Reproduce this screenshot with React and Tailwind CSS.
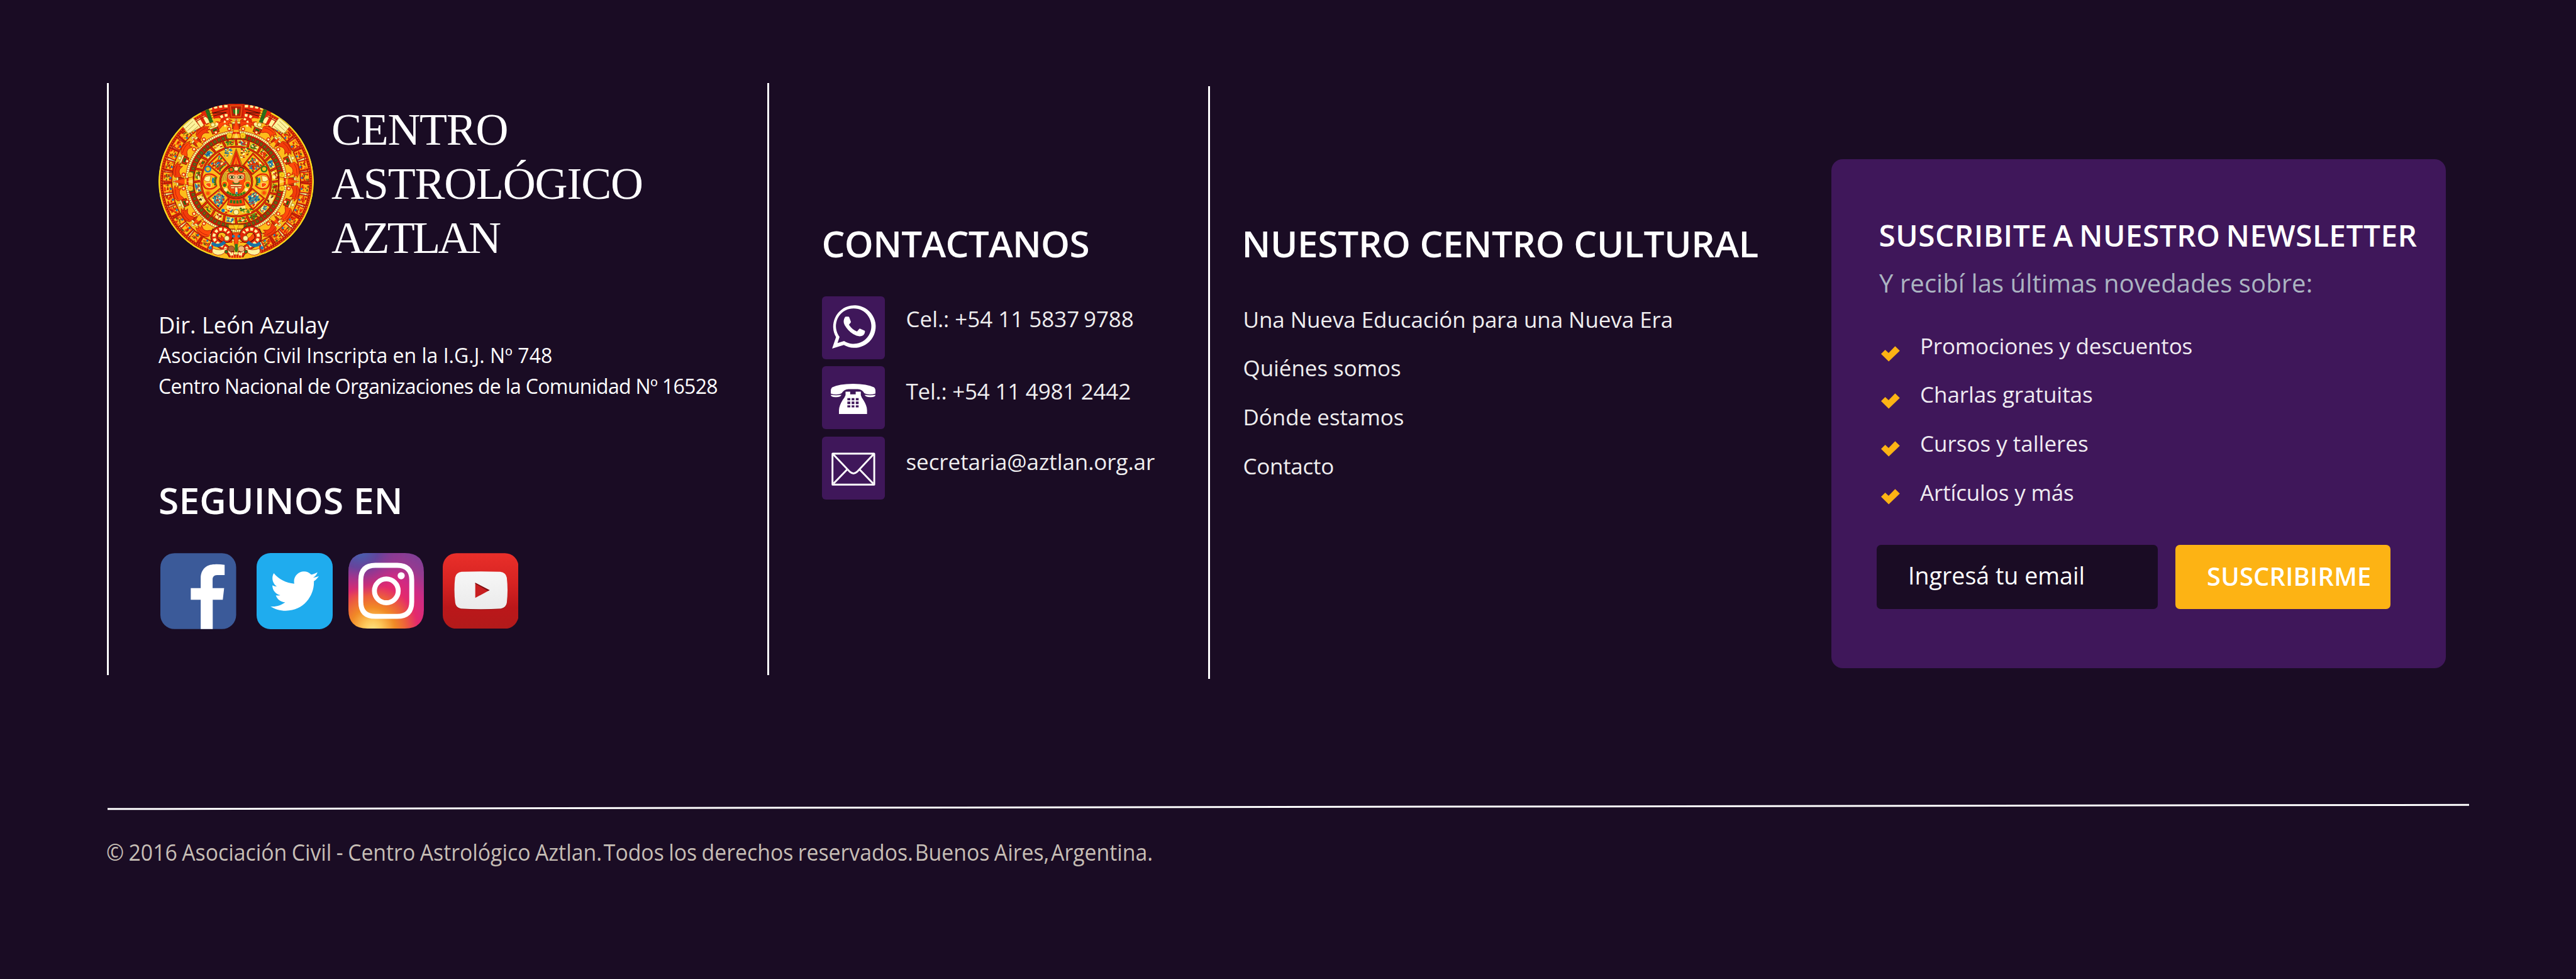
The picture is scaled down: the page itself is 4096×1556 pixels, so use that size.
import React from "react";
import { FaTwitter } from "react-icons/fa";

const RED = "#e22608";
const DARK_RED = "#b81a08";
const ORANGE = "#ff4a0a";
const GOLD = "#fdbd1b";
const CREAM = "#fdf39a";
const GREEN = "#2f7a1c";
const BLUE = "#1b7fb4";
const INK = "#3a1206";

const range = (n) => Array.from({ length: n }, (_, i) => i);

/* Repeatable noise, so the carving looks the same on every render. */
const noise = (seed) => {
  const v = Math.sin(seed * 127.1 + 11.7) * 43758.5453;
  return v - Math.floor(v);
};

function Ring({ r, width, color, dash }) {
  return <circle r={r} fill="none" stroke={color} strokeWidth={width} strokeDasharray={dash} />;
}

function Spokes({ count, start = 0, children }) {
  return range(count).map((i) => (
    <g key={i} transform={`rotate(${start + (360 / count) * i})`}>
      {children(i)}
    </g>
  ));
}

function Speckle({ seed, w, h, n, colors, size = 11 }) {
  return range(n).map((i) => {
    const x = (noise(seed + i * 3) - 0.5) * w;
    const y = (noise(seed + i * 3 + 1) - 0.5) * h;
    const s = size * (0.6 + noise(seed + i * 3 + 2) * 0.9);
    return (
      <rect
        key={i}
        x={x - s / 2}
        y={y - s / 2}
        width={s * 1.2}
        height={s * 0.75}
        rx={s * 0.25}
        fill={colors[Math.floor(noise(seed * 2 + i) * colors.length)]}
      />
    );
  });
}

/* Solar ray with volutes at its base, pointing up. */
function Ray() {
  return (
    <g strokeLinejoin="round">
      <path d="M-72 -352 H72 V-385 H-72Z" fill={GOLD} />
      <circle cx="-54" cy="-374" r="23" fill="#fbd21c" stroke="#a86a08" strokeWidth="3" />
      <circle cx="54" cy="-374" r="23" fill="#fbd21c" stroke="#a86a08" strokeWidth="3" />
      <circle cx="-54" cy="-372" r="9" fill="#f0a512" />
      <circle cx="54" cy="-372" r="9" fill="#f0a512" />
      <path d="M0 -512 L38 -352 H-38Z" fill={GOLD} stroke={DARK_RED} strokeWidth="4" />
      <path d="M0 -512 L23 -420 H-23Z" fill={ORANGE} />
      <path d="M-27 -404 H27 L31 -388 H-31Z" fill={RED} />
      <path d="M0 -404 L18 -352 H-18Z" fill={CREAM} opacity="0.5" />
    </g>
  );
}

function Serpent() {
  return (
    <g>
      <path d="M30 610 C60 520 190 520 180 440 C170 380 90 370 60 420 C45 455 70 480 100 468" fill="none" stroke={INK} strokeWidth="58" />
      <path d="M30 610 C60 520 190 520 180 440 C170 380 90 370 60 420 C45 455 70 480 100 468" fill="none" stroke={RED} strokeWidth="50" />
      <path d="M30 610 C60 520 190 520 180 440 C170 380 90 370 60 420" fill="none" stroke={CREAM} strokeWidth="24" strokeDasharray="24 14" />
      <path d="M92 492 Q150 545 196 500" fill="none" stroke={BLUE} strokeWidth="26" />
      <path d="M92 492 Q150 545 196 500" fill="none" stroke="#0c3e60" strokeWidth="26" strokeDasharray="2 8" />
      <path d="M70 540 Q130 570 190 545 Q210 590 150 600 Q90 600 70 540" fill={CREAM} stroke={DARK_RED} strokeWidth="4" />
      <circle cx="76" cy="462" r="20" fill={CREAM} stroke="#8a5a10" strokeWidth="3" />
      <circle cx="210" cy="540" r="13" fill={BLUE} />
      <circle cx="80" cy="572" r="14" fill={GREEN} stroke={DARK_RED} strokeWidth="5" />
    </g>
  );
}

function Face() {
  return (
    <g>
      <circle r="132" fill={GOLD} />
      <g fill="#f6d23c">
        <path d="M-118 -62 Q-60 -96 0 -72 Q60 -96 118 -62 L112 40 H-112Z" />
      </g>
      {range(7).map((i) => (
        <g key={i} stroke="#a86a08" strokeWidth="3" fill="none">
          <path d={`M${-72 - i * 7} -72 Q${-88 - i * 7} -20 ${-80 - i * 6} 20`} />
          <path d={`M${72 + i * 7} -72 Q${88 + i * 7} -20 ${80 + i * 6} 20`} />
        </g>
      ))}
      <path d="M-92 -76 Q0 -118 92 -76 Q40 -86 0 -78 Q-40 -86 -92 -76Z" fill={RED} />
      <circle cx="-40" cy="-96" r="19" fill={ORANGE} stroke={GREEN} strokeWidth="10" />
      <circle cx="40" cy="-96" r="19" fill={ORANGE} stroke={GREEN} strokeWidth="10" />
      <circle cy="-104" r="18" fill={CREAM} stroke={DARK_RED} strokeWidth="4" />
      <path d="M-66 -68 Q0 -84 66 -68 Q82 -20 66 50 Q40 104 0 106 Q-40 104 -66 50 Q-82 -20 -66 -68Z" fill={ORANGE} stroke={DARK_RED} strokeWidth="5" />
      <path d="M-62 -56 Q-30 -68 -6 -52 L0 -64 L6 -52 Q30 -68 62 -56 Q74 -30 52 -14 L24 -8 L14 12 H-14 L-24 -8 L-52 -14 Q-74 -30 -62 -56Z" fill="#f7b877" />
      <ellipse cx="-34" cy="-36" rx="23" ry="11" fill={CREAM} stroke={INK} strokeWidth="4" />
      <ellipse cx="34" cy="-36" rx="23" ry="11" fill={CREAM} stroke={INK} strokeWidth="4" />
      <circle cx="-34" cy="-36" r="9" fill="#23430f" />
      <circle cx="34" cy="-36" r="9" fill="#23430f" />
      <path d="M-30 8 L-12 18 H12 L30 8" fill="none" stroke={GREEN} strokeWidth="9" />
      <rect x="-48" y="24" width="96" height="16" rx="6" fill={CREAM} stroke={DARK_RED} strokeWidth="4" />
      <rect x="-44" y="44" width="88" height="14" rx="6" fill={CREAM} stroke={DARK_RED} strokeWidth="4" />
      <path d="M-13 44 H13 L16 96 L3 116 L-11 96Z" fill={CREAM} stroke={DARK_RED} strokeWidth="5" />
      <circle cx="4" cy="94" r="9" fill={BLUE} />
      <circle cx="-94" cy="22" r="25" fill={ORANGE} stroke="#fbd21c" strokeWidth="9" />
      <circle cx="94" cy="22" r="25" fill={ORANGE} stroke="#fbd21c" strokeWidth="9" />
      <ellipse cx="-94" cy="30" rx="12" ry="15" fill={GREEN} />
      <ellipse cx="94" cy="30" rx="12" ry="15" fill={GREEN} />
      <circle cx="-84" cy="66" r="14" fill={CREAM} />
      <circle cx="84" cy="66" r="14" fill={CREAM} />
      <path d="M-76 84 Q0 138 76 84" fill="none" stroke={GREEN} strokeWidth="17" strokeDasharray="20 3" />
      <circle r="130" fill="none" stroke={INK} strokeWidth="16" />
      <circle r="130" fill="none" stroke={RED} strokeWidth="12" />
    </g>
  );
}

function SunStone() {
  const cells = [
    [BLUE, CREAM, RED], [GREEN, CREAM, DARK_RED], [RED, CREAM, GREEN], [BLUE, "#0f5c88", CREAM],
    [CREAM, DARK_RED, GOLD], [GREEN, DARK_RED, GOLD], [CREAM, "#f7d77a", INK],
  ];
  return (
    <svg viewBox="-633 -633 1266 1266" className="h-[247px] w-[247px] shrink-0" role="img" aria-label="Piedra del Sol">
      <clipPath id="stone"><circle r="633" /></clipPath>
      <g clipPath="url(#stone)">
        <circle r="633" fill={GOLD} />
        <Ring r={629} width={8} color="#f3e01c" />
        <Ring r={608} width={22} color={DARK_RED} />
        <Ring r={608} width={11} color={ORANGE} dash="11 9" />
        <Ring r={562} width={66} color={CREAM} />
        <Ring r={562} width={66} color={RED} dash="26 30" />
        <Ring r={588} width={7} color={DARK_RED} />
        <Ring r={524} width={9} color={DARK_RED} dash="24 9" />
        {range(26).map((i) => {
          const side = i < 13 ? 1 : -1;
          const angle = side * (38 + (i % 13) * 9.6);
          return (
            <g key={i} transform={`rotate(${angle}) translate(0 -562)`}>
              <rect x="-36" y="-36" width="72" height="72" fill={GOLD} stroke={RED} strokeWidth="9" />
              <rect x="-41" y="-41" width="82" height="82" fill="none" stroke={INK} strokeWidth="2" />
              <Speckle seed={i * 17 + 5} w={54} h={54} n={22} colors={[RED, ORANGE, DARK_RED, RED, GOLD, "#6b5a16"]} size={12} />
              <circle cx={side * 8} cy="26" r="8" fill={BLUE} />
            </g>
          );
        })}
        <Ring r={470} width={98} color={GOLD} />
        <Spokes count={16} start={11.25}>
          {(i) => (
            <g>
              <path d="M-62 -498 Q-30 -536 40 -512 L66 -494 L42 -492 L58 -470 L30 -478 L36 -452 L10 -470 Q-20 -478 -40 -452 L-62 -440Z" fill={i % 2 ? ORANGE : "#f23c0a"} stroke={DARK_RED} strokeWidth="4" />
              <path d="M-50 -492 Q-10 -510 34 -498" fill="none" stroke={DARK_RED} strokeWidth="4" />
              <circle cx="72" cy="-462" r="15" fill={CREAM} stroke="#9a6a14" strokeWidth="4" />
            </g>
          )}
        </Spokes>
        <Spokes count={16} start={0}>
          {() => (
            <g>
              <rect x="-30" y="-470" width="60" height="42" fill={RED} stroke={INK} strokeWidth="3" />
              <rect x="-17" y="-462" width="34" height="30" fill={GREEN} />
              <path d="M-10 -456 L10 -438 M10 -456 L-10 -438" stroke="#14420c" strokeWidth="5" />
              <rect x="-34" y="-486" width="68" height="14" rx="7" fill={CREAM} stroke="#9a6a14" strokeWidth="3" />
              <circle cx="0" cy="-499" r="13" fill={CREAM} stroke="#9a6a14" strokeWidth="3" />
            </g>
          )}
        </Spokes>
        <Spokes count={24} start={7.5}>
          {() => <circle cy="-432" r="13" fill={CREAM} stroke={RED} strokeWidth="7" />}
        </Spokes>
        <circle r="416" fill={RED} />
        <Ring r={402} width={20} color="#8a5a10" />
        <Ring r={402} width={18} color={CREAM} dash="14 3" />
        <Ring r={388} width={5} color={DARK_RED} />
        <Ring r={366} width={36} color={DARK_RED} />
        <Spokes count={64}>
          {() => (
            <g>
              <rect x="-11" y="-378" width="22" height="24" fill={GREEN} />
              <circle cy="-366" r="5" fill={RED} />
              <path d="M17 -382 V-350" stroke={RED} strokeWidth="4" />
            </g>
          )}
        </Spokes>
        <Ring r={345} width={5} color={INK} />
        <Ring r={339} width={9} color={RED} />
        <Ring r={316} width={52} color={GOLD} />
        <Spokes count={20} start={9}>
          {(i) => (
            <g>
              <g transform="translate(0 -316)">
                <rect x="-28" y="-19" width="56" height="38" rx="12" fill={cells[i % 7][0]} opacity="0.75" />
                <Speckle seed={i * 31 + 2} w={58} h={38} n={16} colors={cells[i % 7]} size={12} />
              </g>
              <path d="M50 -342 V-290" stroke={INK} strokeWidth="19" />
              <path d="M50 -342 V-290" stroke={RED} strokeWidth="15" />
            </g>
          )}
        </Spokes>
        <Ring r={283} width={17} color={INK} />
        <Ring r={283} width={13} color={RED} />
        <circle r="276" fill={GOLD} />
        {[45, 135, 225, 315].map((a, i) => (
          <g key={a} transform={`rotate(${a})`}>
            <path d="M-62 -256 H62 L50 -138 H-50Z" fill={GOLD} stroke={INK} strokeWidth="15" />
            <path d="M-62 -256 H62 L50 -138 H-50Z" fill={GOLD} stroke={RED} strokeWidth="11" />
            <g transform="translate(0 -198)">
              <rect x="-38" y="-36" width="76" height="72" rx="14" fill={i === 1 || i === 2 ? BLUE : DARK_RED} opacity="0.7" />
              <Speckle seed={a} w={92} h={90} n={44} colors={i === 1 || i === 2 ? [BLUE, CREAM, BLUE, "#0f5c88", RED] : [RED, CREAM, DARK_RED, GREEN, BLUE]} size={13} />
            </g>
          </g>
        ))}
        {[-1, 1].map((s) => (
          <g key={s} transform={`scale(${s} 1)`}>
            <path d="M160 -36 Q196 -72 248 -56 Q272 -34 272 0 Q272 36 248 56 Q196 72 160 36 Q176 0 160 -36Z" fill={GOLD} stroke={RED} strokeWidth="12" />
            <path d="M166 -34 Q184 0 166 34" fill="none" stroke={GREEN} strokeWidth="18" strokeDasharray="14 3" />
            <path d="M186 -30 Q196 -8 186 12" fill="none" stroke={BLUE} strokeWidth="14" />
            <path d="M206 -46 Q256 -50 262 -14 Q236 10 214 -4Z" fill={CREAM} stroke={DARK_RED} strokeWidth="3" />
            <path d="M204 14 Q236 4 250 22 Q226 54 206 46Z" fill={ORANGE} stroke={CREAM} strokeWidth="5" />
          </g>
        ))}
        <circle cx="-230" cy="-102" r="22" fill={GOLD} stroke={BLUE} strokeWidth="12" />
        <circle cx="228" cy="-102" r="22" fill={GOLD} stroke={GREEN} strokeWidth="12" />
        <circle cx="-230" cy="96" r="20" fill={ORANGE} stroke="#f39a12" strokeWidth="12" />
        <circle cx="228" cy="92" r="20" fill={ORANGE} stroke="#f39a12" strokeWidth="12" />
        <g transform="translate(-66 -232)"><Speckle seed={71} w={72} h={76} n={34} colors={[BLUE, CREAM, "#0f5c88", GOLD]} /></g>
        <g transform="translate(66 -232)"><Speckle seed={92} w={76} h={76} n={34} colors={[CREAM, RED, GREEN, "#7a3a12"]} /></g>
        <path d="M0 -268 L52 -128 H-52Z" fill={GOLD} stroke={INK} strokeWidth="3" />
        <path d="M0 -262 L44 -132 H22 L0 -200 L-22 -132 H-44Z" fill={RED} />
        <path d="M0 -196 L14 -134 H-14Z" fill={ORANGE} />
        <path d="M-56 130 L-72 190 Q0 208 72 190 L56 130 Q0 152 -56 130Z" fill={ORANGE} stroke={DARK_RED} strokeWidth="6" />
        <path d="M-50 160 Q0 174 50 160" fill="none" stroke={GREEN} strokeWidth="26" strokeDasharray="18 8" />
        <path d="M-76 204 Q0 224 76 204" fill="none" stroke={CREAM} strokeWidth="22" strokeDasharray="17 2" />
        <circle cy="250" r="22" fill={CREAM} stroke="#9a6a14" strokeWidth="5" />
        <circle cx="-106" cy="236" r="14" fill={BLUE} />
        <g transform="translate(-62 240)"><Speckle seed={41} w={60} h={40} n={20} colors={[BLUE, RED, CREAM]} /></g>
        <g transform="translate(78 236)"><Speckle seed={58} w={90} h={42} n={26} colors={[GREEN, GREEN, CREAM, DARK_RED]} /></g>
        <Face />

        {[-45, 45, 135, 225].map((a) => (
          <g key={a} transform={`rotate(${a})`}>
            <path d="M0 -500 L26 -404 H-26Z" fill={GOLD} stroke={DARK_RED} strokeWidth="4" />
            <path d="M0 -500 L16 -446 H-16Z" fill={ORANGE} />
          </g>
        ))}
        {[0, 90, 270].map((a) => (
          <g key={a} transform={`rotate(${a})`}><Ray /></g>
        ))}
        <g transform="rotate(180) translate(0 20) scale(0.85 1)">
          <path d="M-72 -372 H72 V-405 H-72Z" fill={GOLD} stroke="#a86a08" strokeWidth="3" />
          <path d="M0 -425 L28 -372 H-28Z" fill="#fbd21c" stroke="#a86a08" strokeWidth="3" />
        </g>

        {[-1, 1].map((s) => (
          <g key={s} transform={`scale(${s} 1)`}>
            <path d="M62 -630 L270 -606 L300 -570 L190 -478 L60 -506Z" fill={RED} />
            <path d="M70 -614 Q170 -612 240 -584" fill="none" stroke={CREAM} strokeWidth="20" strokeDasharray="26 16" />
            <path d="M70 -590 L200 -556 L80 -562 L196 -530" fill="none" stroke={INK} strokeWidth="5" />
            <path d="M70 -540 Q150 -540 160 -450" fill="none" stroke={CREAM} strokeWidth="22" strokeDasharray="22 16" />
            <path d="M62 -510 Q112 -500 84 -440" fill="none" stroke={CREAM} strokeWidth="16" strokeDasharray="18 14" />
            <path d="M128 -500 Q200 -520 190 -440" fill="none" stroke={GOLD} strokeWidth="26" />
            <path d="M240 -590 L200 -480" stroke={GREEN} strokeWidth="30" />
            <path d="M240 -590 L200 -480" stroke="#174d0e" strokeWidth="30" strokeDasharray="3 9" />
            <path d="M214 -592 L184 -496" stroke="#f3cf1e" strokeWidth="15" strokeDasharray="14 6" />
            <path d="M352 -520 L436 -448 L390 -392 L290 -440Z" fill={CREAM} stroke="#a8882c" strokeWidth="3" />
            <path d="M336 -470 L396 -414 M352 -492 L414 -432 M310 -450 L370 -400" stroke="#a8882c" strokeWidth="4" />
            <circle cx="190" cy="-462" r="17" fill={CREAM} stroke="#9a6a14" strokeWidth="4" />
          </g>
        ))}
        <path d="M-62 -633 H62 L48 -516 H-48Z" fill={RED} stroke={DARK_RED} strokeWidth="5" />
        <path d="M-46 -616 H46 L36 -530 H-36Z" fill={DARK_RED} stroke={GOLD} strokeWidth="3" />
        <path d="M-28 -594 L0 -576 L28 -594 L22 -552 H-22Z" fill={GREEN} />
        <rect x="-7" y="-600" width="14" height="62" rx="5" fill={CREAM} />

        <path d="M-210 633 L-180 500 H180 L210 633Z" fill={GOLD} />
        <Serpent />
        <g transform="scale(-1 1)"><Serpent /></g>
        <path d="M-24 420 H24 L12 520 H-12Z" fill={ORANGE} stroke={DARK_RED} strokeWidth="4" />
        <circle cx="-22" cy="446" r="12" fill={BLUE} />
        <circle cx="22" cy="446" r="12" fill={BLUE} />
        <ellipse cx="-40" cy="548" rx="26" ry="24" fill="#b5602c" stroke={INK} strokeWidth="3" />
        <ellipse cx="42" cy="548" rx="26" ry="24" fill="#f7b877" stroke={INK} strokeWidth="3" />
        <rect x="-11" y="508" width="24" height="66" rx="10" fill={GREEN} />
        <path d="M-54 586 H54" stroke={CREAM} strokeWidth="18" strokeDasharray="14 4" />
        <path d="M-40 612 H40" stroke={RED} strokeWidth="20" strokeDasharray="16 5" />
      </g>
    </svg>
  );
}

function FacebookIcon() {
  return (
    <svg viewBox="46 63 618 619" className="h-[121px] w-[120.5px]" role="img" aria-label="Facebook">
      <rect x="46" y="63" width="618" height="619" rx="116" fill="#3b5a99" />
      <path d="M375 682 V443 H294 V348 H375 V265 C376 196 420 154 488 154 Q530 153 570 158 V242 H508 C484 243 472 256 472 278 V348 H566 L555 443 H473 V682Z" fill="#fff" />
    </svg>
  );
}

function InstagramIcon() {
  return (
    <svg viewBox="45 63 615 615" className="h-[120px] w-[120px]" role="img" aria-label="Instagram">
      <defs>
        <radialGradient id="ig-warm" cx="0.32" cy="1.02" r="1.25">
          <stop offset="0" stopColor="#ffe384" />
          <stop offset="0.1" stopColor="#fdc759" />
          <stop offset="0.24" stopColor="#f18a26" />
          <stop offset="0.36" stopColor="#ec5f3c" />
          <stop offset="0.48" stopColor="#e42a6c" />
          <stop offset="0.62" stopColor="#cf2a84" />
          <stop offset="0.78" stopColor="#963a90" />
          <stop offset="1" stopColor="#74419a" />
        </radialGradient>
        <radialGradient id="ig-cool" cx="0.15" cy="-0.05" r="0.62">
          <stop offset="0" stopColor="#3f69b4" />
          <stop offset="0.4" stopColor="#5548a0" stopOpacity="0.8" />
          <stop offset="1" stopColor="#a0308f" stopOpacity="0" />
        </radialGradient>
      </defs>
      <path d="M200 63 H505 Q660 63 660 218 V523 Q660 678 505 678 H200 Q45 678 45 523 V218 Q45 63 200 63Z" fill="url(#ig-warm)" />
      <path d="M200 63 H505 Q660 63 660 218 V523 Q660 678 505 678 H200 Q45 678 45 523 V218 Q45 63 200 63Z" fill="url(#ig-cool)" />
      <path d="M265 163 H442 Q561 163 561 282 V460 Q561 579 442 579 H265 Q146 579 146 460 V282 Q146 163 265 163Z" fill="none" stroke="#fff" strokeWidth="40" />
      <circle cx="354" cy="371" r="97" fill="none" stroke="#fff" strokeWidth="40" />
      <circle cx="475" cy="248" r="29" fill="#fff" />
    </svg>
  );
}

function YoutubeIcon() {
  return (
    <svg viewBox="814 64 620 618" className="h-[120.5px] w-[120.5px]" role="img" aria-label="YouTube">
      <defs>
        <linearGradient id="yt-tile" x1="0" y1="0" x2="0" y2="1">
          <stop offset="0" stopColor="#e92f2a" />
          <stop offset="0.4" stopColor="#d62322" />
          <stop offset="0.72" stopColor="#bb171a" />
          <stop offset="1" stopColor="#b21a1a" />
        </linearGradient>
        <linearGradient id="yt-screen" x1="0" y1="0" x2="0" y2="1">
          <stop offset="0" stopColor="#f6f6f6" />
          <stop offset="1" stopColor="#ebebeb" />
        </linearGradient>
      </defs>
      <rect x="814" y="64" width="620" height="618" rx="112" fill="url(#yt-tile)" />
      <path d="M968 220 Q1126 211 1284 220 Q1331 226 1338 268 Q1350 370 1338 474 Q1332 514 1290 521 Q1126 534 962 521 Q921 514 916 474 Q903 370 915 268 Q922 226 968 220Z" fill="#7d0f10" opacity="0.55" />
      <path d="M968 216 Q1126 210 1284 216 Q1331 222 1338 264 Q1350 366 1338 470 Q1332 510 1290 517 Q1126 528 962 517 Q921 510 916 470 Q903 366 915 264 Q922 222 968 216Z" fill="url(#yt-screen)" />
      <path d="M1080 306 L1197 366 L1080 430Z" fill="#c81e20" />
      <path d="M1080 306 L1197 366 L1184 373 L1080 314Z" fill="#7d1214" />
    </svg>
  );
}

function WhatsappTile() {
  return (
    <svg viewBox="33 30 515 515" className="h-full w-full" fill="#fff" aria-hidden="true">
      <path fillRule="evenodd" d="M148 364 A174 174 0 1 1 212 428 L116 457Z M177 362 A145 145 0 1 1 214 396 L160 413Z" />
      <path d="M228 196 H248 Q254 196 256 201 L269 236 Q271 241 267 246 L256 259 Q254 262 256 266 Q282 304 318 317 Q321 318 323 315 L338 297 Q341 293 346 295 L381 311 Q386 314 385 320 Q384 338 372 348 Q358 358 340 357 Q290 352 248 306 Q218 272 212 248 Q208 222 218 206 Q222 197 228 196Z" />
    </svg>
  );
}

function PhoneTile() {
  return (
    <svg viewBox="33 25 515 515" className="h-full w-full" fill="#fff" aria-hidden="true">
      <path d="M105 249 V228 Q105 206 118 197 Q170 170 288 169 Q404 170 458 197 Q471 206 471 228 V249 Q450 257 425 257 Q398 257 380 246 Q362 214 326 213 H250 Q214 214 194 246 Q178 257 150 257 Q122 257 105 249Z" />
      <path d="M105 259 Q148 267 192 259 Q188 278 150 278 Q106 280 105 259Z" />
      <path d="M471 259 Q428 267 382 259 Q388 278 428 278 Q470 280 471 259Z" />
      <path fillRule="evenodd" d="M226 233 H264 V255 H309 V233 H351 V262 Q356 280 372 302 Q402 350 402 385 V416 H172 V385 Q172 350 203 300 Q220 280 226 262Z M241 287 h24 v18 h-24Z M276 287 h22 v18 h-22Z M310 287 h23 v18 h-23Z M241 315 h24 v20 h-24Z M276 315 h22 v20 h-22Z M310 315 h23 v20 h-23Z M241 345 h24 v17 h-24Z M276 345 h22 v17 h-22Z M310 345 h23 v17 h-23Z" />
    </svg>
  );
}

function MailTile() {
  return (
    <svg viewBox="33 600 515 515" className="h-full w-full" fill="none" stroke="#fff" strokeWidth="15" aria-hidden="true">
      <rect x="119" y="739" width="342" height="254" rx="2" />
      <path d="M126 745 L262 888 Q291 914 320 888 L454 745 M128 984 L240 868 M452 984 L340 868" />
    </svg>
  );
}

function Heading({ className, children }) {
  return (
    <h2 className={`whitespace-nowrap text-[58.5px] font-semibold leading-[60px] text-white ${className}`}>{children}</h2>
  );
}

function ContactRow({ icon, className, textClass, children }) {
  return (
    <div className={`flex items-start gap-[34px] ${className}`}>
      <div className="h-[100px] w-[100px] shrink-0 rounded-[6px] bg-[#3f175a]">{icon}</div>
      <p className={`whitespace-nowrap text-[35px] leading-[48px] text-[#efeeef] ${textClass}`}>{children}</p>
    </div>
  );
}

function Perk({ checkClass, textClass, children }) {
  return (
    <li className="flex h-[77.7px] items-start gap-[32px]">
      <svg viewBox="0 0 30 25" className={`ml-[7px] h-[25px] w-[30px] shrink-0 ${checkClass}`} fill="#fdb314" aria-hidden="true">
        <path d="M0 12.6 L6.6 6 L12 11 L22.4 0.2 L29.8 7.4 L12.2 24.6Z" />
      </svg>
      <span className={`whitespace-nowrap text-[35px] leading-[77.7px] text-[#efebf1] ${textClass}`}>{children}</span>
    </li>
  );
}

function Brand() {
  return (
    <section className="mt-[132px] h-[941px] w-[1050px] shrink-0 border-l-[3px] border-white pl-[79px] pt-[33px] text-white">
      <div className="flex items-start gap-[28px]">
        <SunStone />
        <h1 className="-mt-[2px] flex flex-col whitespace-nowrap font-['Liberation_Serif',serif] text-[72px] leading-[86px]">
          <span className="tracking-[-1.3px]">CENTRO</span>
          <span className="tracking-[-1.2px]">ASTROLÓGICO</span>
          <span className="tracking-[-3.6px]">AZTLAN</span>
        </h1>
      </div>
      <div className="mt-[71px] whitespace-nowrap text-[32px] leading-[48.5px]">
        <p className="text-[36.3px] leading-[49px] tracking-[-0.07px]">Dir. León Azulay</p>
        <p>Asociación Civil Inscripta en la I.G.J. Nº 748</p>
        <p className="tracking-[-0.69px]">Centro Nacional de Organizaciones de la Comunidad Nº 16528</p>
      </div>
      <Heading className="mt-[125.5px] tracking-[0.24px]">SEGUINOS EN</Heading>
      <div className="ml-[3px] mt-[55px] flex items-start">
        <FacebookIcon />
        <div className="ml-[32.5px] h-[121px] w-[120.5px] rounded-[22px] bg-[#1facee] pl-[22px] pt-[22px]">
          <FaTwitter className="h-[77px] w-[77px] text-white" aria-label="Twitter" />
        </div>
        <div className="ml-[25px]"><InstagramIcon /></div>
        <div className="ml-[30px]"><YoutubeIcon /></div>
      </div>
    </section>
  );
}

function Contact() {
  return (
    <section className="mt-[132px] h-[941px] w-[701px] shrink-0 border-l-[3px] border-white pl-[83.5px] pt-[224px]">
      <Heading className="tracking-[-0.74px]">CONTACTANOS</Heading>
      <ContactRow icon={<WhatsappTile />} className="mt-[55px]" textClass="mt-[12px] tracking-[-0.03px]">
        Cel.: +54 11 5837<span className="tracking-[-2.5px]"> </span>9788
      </ContactRow>
      <ContactRow icon={<PhoneTile />} className="mt-[10.5px]" textClass="mt-[16px] tracking-[-0.24px]">
        Tel.: +54 11 4981 2442
      </ContactRow>
      <ContactRow icon={<MailTile />} className="mt-[12.5px]" textClass="mt-[16px] tracking-[-0.08px]">
        secretaria@aztlan.org.ar
      </ContactRow>
    </section>
  );
}

function CulturalCentre() {
  return (
    <section className="mt-[137px] h-[942px] w-[990.5px] shrink-0 border-l-[3px] border-white pl-[50.5px] pt-[219px]">
      <Heading className="tracking-[-0.35px]">NUESTRO CENTRO CULTURAL</Heading>
      <nav className="ml-[2px] mt-[52.5px] flex flex-col whitespace-nowrap text-[35px] leading-[77.9px] text-[#efeeef]">
        <a className="tracking-[-0.08px]">Una Nueva Educación para una Nueva Era</a>
        <a className="tracking-[-0.06px]">Quiénes somos</a>
        <a className="tracking-[-0.04px]">Dónde estamos</a>
        <a className="tracking-[-0.3px]">Contacto</a>
      </nav>
    </section>
  );
}

function Newsletter() {
  return (
    <section className="mt-[253px] h-[809px] w-[977px] shrink-0 rounded-[18px] bg-[#3f175a] pl-[72.5px] pt-[91px]">
      <h2 className="ml-[3.5px] whitespace-nowrap text-[47.8px] font-semibold leading-[60px] tracking-[0.45px] text-white [word-spacing:-3.5px]">
        SUSCRIBITE A NUESTRO NEWSLETTER
      </h2>
      <p className="ml-[4px] mt-[18px] whitespace-nowrap text-[40px] leading-[56px] tracking-[0.08px] text-[#abb4c1]">
        Y recibí las últimas novedades sobre:
      </p>
      <ul className="mt-[32.5px]">
        <Perk checkClass="mt-[39px]" textClass="tracking-[-0.18px]">Promociones y descuentos</Perk>
        <Perk checkClass="mt-[37px]" textClass="tracking-[-0.05px]">Charlas gratuitas</Perk>
        <Perk checkClass="mt-[35px]" textClass="tracking-[-0.01px]">Cursos y talleres</Perk>
        <Perk checkClass="mt-[33px]" textClass="tracking-[-0.15px]">Artículos y más</Perk>
      </ul>
      <form className="mt-[44.5px] flex gap-[27.5px]">
        <label className="flex h-[102px] w-[447px] items-center rounded-[7px] bg-[#1a0c24] pb-[4px] pl-[50px] text-[37.6px] leading-[50px] text-white">
          Ingresá tu email
        </label>
        <button type="button" className="flex h-[102px] w-[342.5px] items-center rounded-[7px] bg-[#fdb314] pb-[2px] pl-[50.5px] text-[39.8px] font-semibold leading-[50px] tracking-[0.25px] text-white">
          SUSCRIBIRME
        </button>
      </form>
    </section>
  );
}

export default function App() {
  return (
    <footer className="h-[1556px] w-[4096px] overflow-hidden bg-[#1a0c24] font-['Open_Sans',sans-serif]">
      <div className="flex h-[1280.5px] items-start pl-[170px]">
        <Brand />
        <Contact />
        <CulturalCentre />
        <Newsletter />
      </div>
      <div className="ml-[171px] h-[2.5px] w-[3755px] rotate-[-0.1deg] bg-white" />
      <p className="ml-[169px] mt-[47px] origin-left scale-x-[0.938] whitespace-nowrap text-[36px] leading-[50px] text-[#c6beb5] [word-spacing:-1.4px]">
        © 2016 Asociación Civil - Centro Astrológico Aztlan.<span className="tracking-[-5px]"> </span>Todos los derechos
        reservados.<span className="tracking-[-5px]"> </span>Buenos Aires,<span className="tracking-[-5px]"> </span>Argentina.
      </p>
    </footer>
  );
}
